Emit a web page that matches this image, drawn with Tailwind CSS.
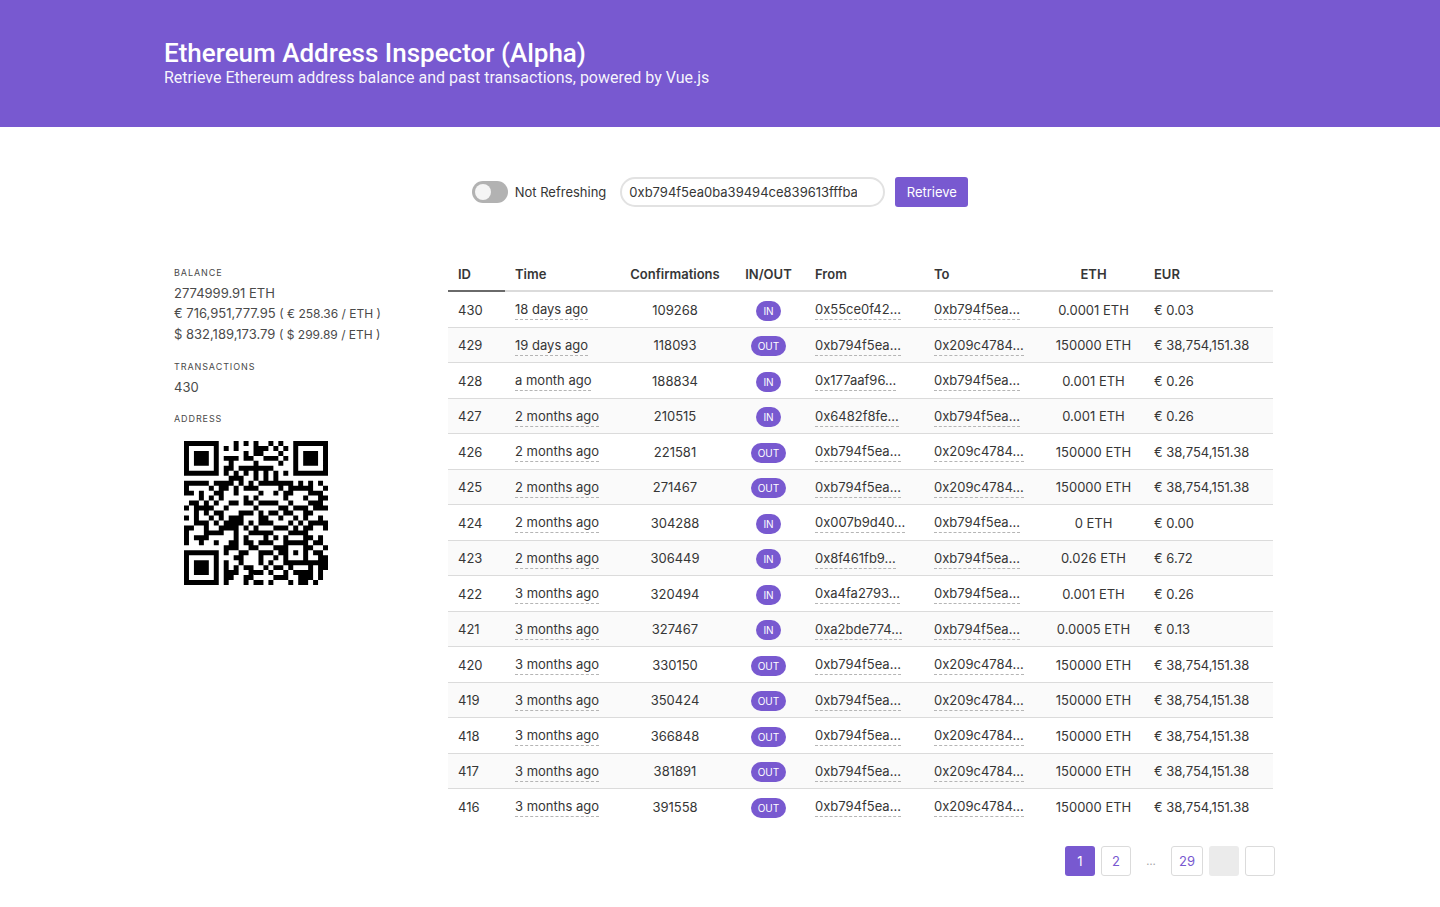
<!DOCTYPE html>
<html lang="en">
<head>
<meta charset="utf-8">
<meta name="viewport" content="width=device-width, initial-scale=1">
<title>Ethereum Address Inspector (Alpha)</title>
<script src="https://cdn.jsdelivr.net/npm/@tailwindcss/browser@4"></script>
</head>
<body class="min-h-screen bg-white font-[Inter,'Liberation_Sans',sans-serif] text-[13px] leading-5 text-[#363636]">
<header class="bg-[#7859d0] font-[Roboto,'Liberation_Sans',sans-serif] text-white">
  <div class="mx-auto max-w-[1112px] pt-[38px] pb-[39px]">
    <h1 class="text-[26px] font-medium leading-[30px]">Ethereum Address Inspector (Alpha)</h1>
    <p class="text-base leading-5 text-white/95">Retrieve Ethereum address balance and past transactions, powered by Vue.js</p>
  </div>
</header>

<main class="mx-auto max-w-[1112px]">
  <form class="flex items-center justify-center pt-[50px]" onsubmit="return false">
    <label class="mr-3.5 flex cursor-pointer items-center gap-[7px]">
      <input type="checkbox" role="switch" class="peer sr-only">
      <span class="flex h-[22px] w-9 items-center rounded-full bg-[#b2b2b2] p-[3px] peer-checked:justify-end peer-checked:bg-[#7859d0]">
        <span class="size-4 rounded-full bg-[#f5f5f5]"></span>
      </span>
      <span>Not Refreshing</span>
    </label>
    <input type="text" aria-label="Ethereum address" value="0xb794f5ea0ba39494ce839613fffba74279579268" class="mr-2.5 h-[30px] w-[265px] rounded-full border-2 border-[#e2e2e2] bg-white pr-[26px] pl-[7px] outline-none">
    <button type="submit" class="h-[30px] w-[73px] rounded-[3px] bg-[#7859d0] text-white">Retrieve</button>
  </form>

  <div class="flex items-start pt-[50px]">
    <aside class="w-[284px] shrink-0 pt-1.5 pl-2.5">
      <h2 class="text-[9px] tracking-widest uppercase text-[#4a4a4a]">Balance</h2>
      <div class="mb-3 text-[#4a4a4a]">
        <p>2774999.91 ETH</p>
        <p>€ 716,951,777.95 <small class="text-[12px]">( € 258.36 / ETH )</small></p>
        <p>$ 832,189,173.79 <small class="text-[12px]">( $ 299.89 / ETH )</small></p>
      </div>
      <h2 class="text-[9px] tracking-widest uppercase text-[#4a4a4a]">Transactions</h2>
      <p class="mb-3 text-[#4a4a4a]">430</p>
      <h2 class="text-[9px] tracking-widest uppercase text-[#4a4a4a]">Address</h2>
      <svg id="qr" class="mt-3 ml-2.5 size-36" viewBox="0 0 29 29" role="img" aria-label="QR code of the address"><path fill="#000"/></svg>
    </aside>

    <section class="min-w-0 flex-1 pr-px">
      <div class="pr-0.5">
        <table class="w-full table-fixed border-separate border-spacing-0 text-left">
          <colgroup>
            <col class="w-[57px]"><col class="w-[113px]"><col class="w-[114px]"><col class="w-[73px]"><col class="w-[119px]"><col class="w-[119px]"><col class="w-[101px]"><col>
          </colgroup>
          <thead>
            <tr class="h-[35px]">
              <th class="border-b-2 border-[#6a6a6a] px-2.5 font-semibold">ID</th>
              <th class="border-b-2 border-[#dbdbdb] px-2.5 font-semibold">Time</th>
              <th class="border-b-2 border-[#dbdbdb] text-center font-semibold">Confirmations</th>
              <th class="border-b-2 border-[#dbdbdb] text-center font-semibold">IN/OUT</th>
              <th class="border-b-2 border-[#dbdbdb] px-2.5 font-semibold">From</th>
              <th class="border-b-2 border-[#dbdbdb] px-2.5 font-semibold">To</th>
              <th class="border-b-2 border-[#dbdbdb] text-center font-semibold">ETH</th>
              <th class="border-b-2 border-[#dbdbdb] px-2.5 font-semibold">EUR</th>
            </tr>
          </thead>
          <tbody id="rows"></tbody>
        </table>
      </div>

      <nav aria-label="Pagination" class="mt-[21px] flex justify-end gap-1.5">
        <button class="h-[30px] min-w-[30px] rounded-[3px] bg-[#7859d0] text-white">1</button>
        <button class="h-[30px] min-w-[30px] rounded-[3px] border border-[#dbdbdb] text-[#7859d0]">2</button>
        <span class="w-7 pt-[5px] text-center text-[11px] text-[#a5a5a5]">…</span>
        <button class="h-[30px] min-w-8 rounded-[3px] border border-[#dbdbdb] text-[#7859d0]">29</button>
        <button disabled aria-label="Previous page" class="h-[30px] min-w-[30px] rounded-[3px] bg-[#ebebeb]"></button>
        <button aria-label="Next page" class="h-[30px] min-w-[30px] rounded-[3px] border border-[#dbdbdb]"></button>
      </nav>
    </section>
  </div>
</main>

<script>
const SELF = '0xb794f5ea...', PEER = '0x209c4784...';
const incoming = (id, time, conf, from, eth, eur) => [id, time, conf, 'IN', from, SELF, eth, eur];
const outgoing = (id, time, conf) => [id, time, conf, 'OUT', SELF, PEER, '150000', '38,754,151.38'];
const transactions = [
  incoming(430, '18 days ago', 109268, '0x55ce0f42...', '0.0001', '0.03'),
  outgoing(429, '19 days ago', 118093),
  incoming(428, 'a month ago', 188834, '0x177aaf96...', '0.001', '0.26'),
  incoming(427, '2 months ago', 210515, '0x6482f8fe...', '0.001', '0.26'),
  outgoing(426, '2 months ago', 221581),
  outgoing(425, '2 months ago', 271467),
  incoming(424, '2 months ago', 304288, '0x007b9d40...', '0', '0.00'),
  incoming(423, '2 months ago', 306449, '0x8f461fb9...', '0.026', '6.72'),
  incoming(422, '3 months ago', 320494, '0xa4fa2793...', '0.001', '0.26'),
  incoming(421, '3 months ago', 327467, '0xa2bde774...', '0.0005', '0.13'),
  outgoing(420, '3 months ago', 330150),
  outgoing(419, '3 months ago', 350424),
  outgoing(418, '3 months ago', 366848),
  outgoing(417, '3 months ago', 381891),
  outgoing(416, '3 months ago', 391558)
];
const dashed = t => `<span class="inline-block border-b border-dashed border-[#b5b5b5]">${t}</span>`;
document.getElementById('rows').innerHTML = transactions.map(([id, time, conf, dir, from, to, eth, eur]) => `
  <tr class="group odd:h-9 even:h-[35px] even:bg-[#fafafa]">
    <td class="border-b border-[#dbdbdb] px-2.5 group-last:border-transparent">${id}</td>
    <td class="border-b border-[#dbdbdb] px-2.5 group-last:border-transparent">${dashed(time)}</td>
    <td class="border-b border-[#dbdbdb] text-center group-last:border-transparent">${conf}</td>
    <td class="border-b border-[#dbdbdb] pt-px text-center group-last:border-transparent"><span class="inline-block h-5 rounded-full bg-[#7859d0] px-[7px] align-middle text-[10px] text-white">${dir}</span></td>
    <td class="border-b border-[#dbdbdb] px-2.5 group-last:border-transparent">${dashed(from)}</td>
    <td class="border-b border-[#dbdbdb] px-2.5 group-last:border-transparent">${dashed(to)}</td>
    <td class="border-b border-[#dbdbdb] text-center group-last:border-transparent">${eth} ETH</td>
    <td class="border-b border-[#dbdbdb] px-2.5 group-last:border-transparent">€ ${eur}</td>
  </tr>`).join('');

// QR code, version 3, error correction level L, mask 2.
function qrPath(text) {
  const N = 29, DATA = 55, EC = 15;
  let bits = '0100' + text.length.toString(2).padStart(8, '0');
  for (const c of text) bits += c.charCodeAt(0).toString(2).padStart(8, '0');
  bits += '0000';
  const words = bits.match(/.{8}/g).map(b => parseInt(b, 2));
  for (let i = 0; words.length < DATA; i++) words.push(i % 2 ? 0x11 : 0xec);
  const mul = (a, b) => { let r = 0; for (; b; b >>= 1) { if (b & 1) r ^= a; a <<= 1; if (a & 256) a ^= 0x11d; } return r; };
  let gen = [1], root = 1;
  for (let i = 0; i < EC; i++) {
    const next = [...gen, 0];
    gen.forEach((g, j) => { next[j + 1] ^= mul(g, root); });
    gen = next; root = mul(root, 2);
  }
  const rem = [...words, ...Array(EC).fill(0)];
  for (let i = 0; i < DATA; i++) { const f = rem[i]; gen.forEach((g, j) => { rem[i + j] ^= mul(g, f); }); }
  const stream = [...words, ...rem.slice(DATA)].map(w => w.toString(2).padStart(8, '0')).join('');
  const m = Array.from({ length: N }, () => Array(N).fill(null));
  const ring = (cy, cx, reach, light) => {
    for (let y = -reach; y <= reach; y++) for (let x = -reach; x <= reach; x++) {
      if (m[cy + y] && cx + x >= 0 && cx + x < N) m[cy + y][cx + x] = light.includes(Math.max(Math.abs(x), Math.abs(y))) ? 0 : 1;
    }
  };
  ring(3, 3, 4, [2, 4]); ring(3, N - 4, 4, [2, 4]); ring(N - 4, 3, 4, [2, 4]); ring(22, 22, 2, [1]);
  for (let i = 8; i < N - 8; i++) m[6][i] = m[i][6] = (i + 1) % 2;
  [...'111110110101010'].forEach((b, i) => {
    b = +b;
    if (i < 6) m[8][i] = b; else if (i === 6) m[8][7] = b; else if (i === 7) m[8][8] = b; else if (i === 8) m[7][8] = b; else m[14 - i][8] = b;
    if (i < 7) m[N - 1 - i][8] = b; else m[8][N - 15 + i] = b;
  });
  m[N - 8][8] = 1;
  let k = 0, up = true;
  for (let col = N - 1; col > 0; col -= 2) {
    if (col === 6) col--;
    for (let i = 0; i < N; i++) for (const x of [col, col - 1]) {
      const y = up ? N - 1 - i : i;
      if (m[y][x] === null) m[y][x] = +(stream[k++] || 0) ^ (x % 3 === 0 ? 1 : 0);
    }
    up = !up;
  }
  return m.flatMap((row, y) => row.map((v, x) => v ? `M${x} ${y}h1v1h-1z` : '')).join('');
}
document.querySelector('#qr path').setAttribute('d', qrPath('0xb794f5ea0ba39494ce839613fffba74279579268'));
</script>
</body>
</html>
